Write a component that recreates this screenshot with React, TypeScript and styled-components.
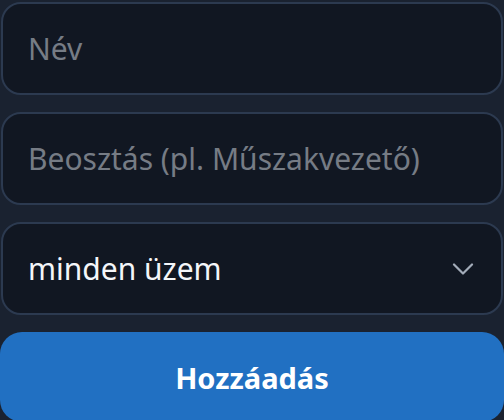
import React from 'react';
import styled, { createGlobalStyle } from 'styled-components';

const GlobalStyle = createGlobalStyle`
  html, body {
    margin: 0;
    padding: 0;
    background: #1a2230;
  }
  body {
    font-family: 'Noto Sans', 'Open Sans', sans-serif;
  }
`;

const Form = styled.form`
  display: flex;
  flex-direction: column;
  gap: 17px;
  padding: 2px 1px 0 1px;
  width: 502px;
`;

const Field = styled.div`
  height: 93px;
  box-sizing: border-box;
  border: 2px solid #2c3a50;
  border-radius: 20px;
  background: #111722;
  display: flex;
  align-items: center;
  padding: 0 27px 0 25px;
`;

const Input = styled.input`
  all: unset;
  flex: 1;
  font-family: inherit;
  font-size: 30px;
  color: #f1f3f6;

  &::placeholder {
    color: #767c85;
  }
`;

const SelectText = styled.span`
  flex: 1;
  font-size: 30px;
  color: #f4f6f9;
`;

const Chevron = styled.svg`
  width: 22px;
  height: 12px;
  color: #a3acb9;
`;

const Button = styled.button`
  all: unset;
  box-sizing: border-box;
  height: 90px;
  margin: 0 -1px;
  border-radius: 22px;
  background: #2170c2;
  color: #ffffff;
  font-family: inherit;
  font-size: 29px;
  font-weight: 700;
  text-align: center;
`;

export default function App() {
  return (
    <>
      <GlobalStyle />
      <Form onSubmit={(e) => e.preventDefault()}>
        <Field>
          <Input placeholder="Név" />
        </Field>
        <Field>
          <Input placeholder="Beosztás (pl. Műszakvezető)" />
        </Field>
        <Field>
          <SelectText>minden üzem</SelectText>
          <Chevron viewBox="0 0 22 12" fill="none" stroke="currentColor" strokeWidth={2.2} strokeLinecap="round" strokeLinejoin="round">
            <path d="M2 1.5l9 9 9-9" />
          </Chevron>
        </Field>
        <Button type="submit">Hozzáadás</Button>
      </Form>
    </>
  );
}
